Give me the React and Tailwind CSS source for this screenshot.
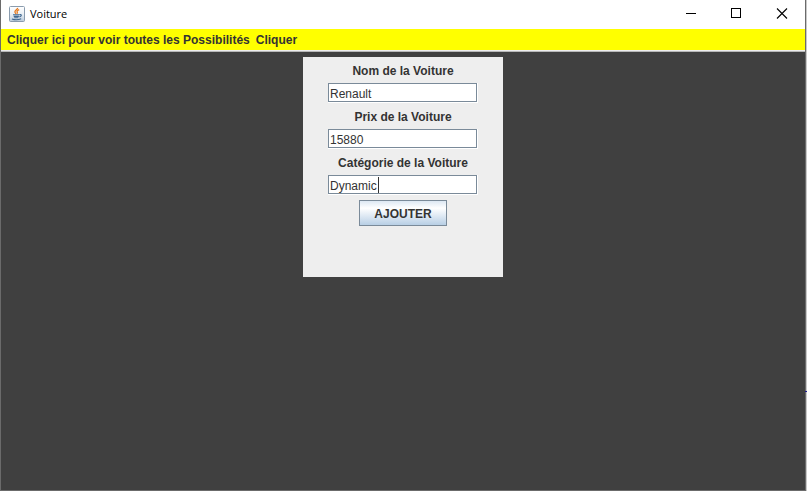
import React, { useState } from "react";

const JavaIcon = () => (
  <svg width="16" height="16" viewBox="0 0 16 16" className="shrink-0" aria-hidden="true">
    <defs>
      <linearGradient id="java-bg" x1="0" y1="0" x2="0" y2="1">
        <stop offset="0" stopColor="#ffffff" />
        <stop offset="0.5" stopColor="#eaf0f5" />
        <stop offset="1" stopColor="#b9cadb" />
      </linearGradient>
    </defs>
    <rect x="0.5" y="0.5" width="15" height="15" rx="1" fill="url(#java-bg)" stroke="#8a9cae" />
    {/* steam */}
    <path d="M8.6 1.8C9 3.4 5.6 4.2 5.9 6c.1.8.8 1.2 1.2 1.8M10.2 3.6C8.4 4.4 7.6 5.2 8.2 6.1c.4.6.3 1-.1 1.6" fill="none" stroke="#e67a1e" strokeWidth="1.3" />
    {/* cup and saucer */}
    <path d="M4 8.7h6.6M4.7 10.4h5.2M5.2 11.8h4.2M3 12.9c2.4 1 6.6.9 9.2-.2M10.8 8.6c2-.5 2.3 1.6-.4 2.3" fill="none" stroke="#3f678f" strokeWidth="1.1" />
  </svg>
);

const WindowButton = ({ label, children }) => (
  <button type="button" aria-label={label} className="flex h-7 w-[46px] items-center justify-center">
    <svg width="12" height="12" viewBox="0 0 12 12" fill="none" stroke="#000" aria-hidden="true">
      {children}
    </svg>
  </button>
);

const TitleBar = () => (
  <header className="flex h-[29px] items-start justify-between bg-white">
    <div className="flex h-7 items-center gap-[5px] pl-2">
      <JavaIcon />
      <h1 className="font-['Open_Sans','Noto_Sans',sans-serif] text-[11px] leading-4 text-black">Voiture</h1>
    </div>
    <div className="flex">
      <WindowButton label="Réduire">
        <path d="M2 5.5h10" />
      </WindowButton>
      <WindowButton label="Agrandir">
        <rect x="1.5" y="0.5" width="9" height="9" />
      </WindowButton>
      <WindowButton label="Fermer">
        <path d="M1 0.5l10 10M11 0.5L1 10.5" strokeWidth="1.1" />
      </WindowButton>
    </div>
  </header>
);

const menus = ["Cliquer ici pour voir toutes les Possibilités", "Cliquer"];

const MenuBar = () => (
  <nav className="flex h-[23px] border-b border-[#b8b8b8] bg-[#eeeeee] pb-px">
    <div className="flex flex-1 items-center gap-1.5 bg-[#ffff00] px-1.5">
      {menus.map((menu) => (
        <button key={menu} type="button" className="text-[12px] leading-4 font-bold whitespace-nowrap">
          {menu}
        </button>
      ))}
    </div>
  </nav>
);

const Field = ({ id, label, value, onChange, caret }) => (
  <>
    <label htmlFor={id} className="pt-0.5 text-[12px] leading-[14px] font-bold">
      {label}
    </label>
    <div className="relative flex h-5 w-[150px] border-r border-b border-white">
      <input
        id={id}
        type="text"
        value={value}
        onChange={(e) => onChange(id, e.target.value)}
        className="w-full border border-[#7a8a99] bg-white px-px pt-0.5 text-[12px] leading-4 outline-none"
      />
      {caret && (
        <span className="pointer-events-none absolute top-0.5 left-0 flex h-4 border-r border-[#333333] pl-[3px] text-[12px]" aria-hidden="true">
          <span className="invisible">{value}</span>
        </span>
      )}
    </div>
  </>
);

const fields = [
  { id: "nom", label: "Nom de la Voiture" },
  { id: "prix", label: "Prix de la Voiture" },
  { id: "categorie", label: "Catégorie de la Voiture", caret: true },
];

const App = () => {
  const [voiture, setVoiture] = useState({ nom: "Renault", prix: "15880", categorie: "Dynamic" });

  const handleChange = (id, value) => {
    setVoiture({ ...voiture, [id]: value });
  };

  return (
    <div className="relative flex min-h-screen border-r border-[#c8c8c8] font-['Liberation_Sans',Arial,sans-serif] text-[#333333]">
      <div className="flex flex-1 flex-col border-x border-b border-[#6b6b6b] bg-[#404040]">
        <TitleBar />
        <MenuBar />
        <main className="flex flex-1 items-start justify-center pt-[5px]">
          <form
            onSubmit={(e) => e.preventDefault()}
            className="flex min-h-[220px] w-[200px] flex-col items-center gap-[5px] bg-[#eeeeee] pt-[5px]"
          >
            {fields.map((field) => (
              <Field key={field.id} {...field} value={voiture[field.id]} onChange={handleChange} />
            ))}
            <button
              type="submit"
              className="h-[26px] w-[88px] border border-[#7a8a99] bg-linear-to-b from-[#dde8f3] via-white via-30% to-[#b8cfe5] pt-0.5 text-[12px] leading-4 font-bold"
            >
              AJOUTER
            </button>
          </form>
        </main>
      </div>
      {/* resize mark on the window edge */}
      <span className="absolute top-[391px] -right-px h-px w-0.5 bg-[#1a1a8c]" aria-hidden="true" />
    </div>
  );
};

export default App;
